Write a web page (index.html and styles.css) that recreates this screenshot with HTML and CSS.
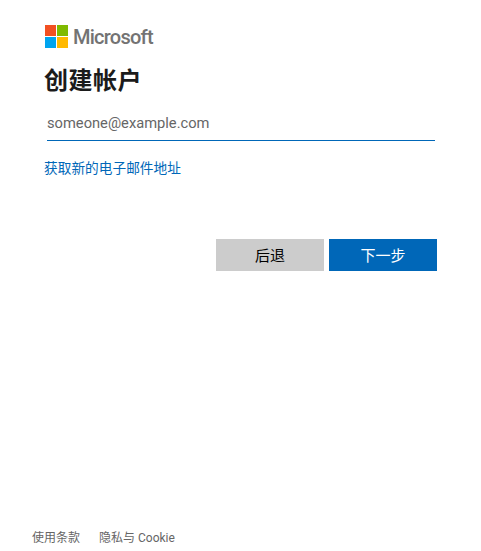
FILE: index.html
```html
<!DOCTYPE html>
<html lang="zh-CN">
<head>
  <meta charset="UTF-8" />
  <title>创建帐户</title>
  <link rel="stylesheet" href="styles.css">
</head>
<body>

<div class="page">
  <div class="card">
    <div class="logo">
      <svg class="logo-mark" width="24" height="24" viewBox="0 0 24 24">
        <rect x="0" y="0" width="11" height="11" fill="#f25022"/>
        <rect x="12" y="0" width="11" height="11" fill="#7fba00"/>
        <rect x="0" y="12" width="11" height="11" fill="#00a4ef"/>
        <rect x="12" y="12" width="11" height="11" fill="#ffb900"/>
      </svg>
      <span class="logo-text">Microsoft</span>
    </div>

    <h1 class="title">创建帐户</h1>

    <input class="email-input" type="text" placeholder="someone@example.com">

    <a class="new-email" href="#">获取新的电子邮件地址</a>

    <div class="buttons">
      <button class="btn btn-back">后退</button>
      <button class="btn btn-next">下一步</button>
    </div>
  </div>

  <div class="footer">
    <a href="#">使用条款</a>
    <a href="#">隐私与 Cookie</a>
  </div>
</div>

</body>
</html>
```

FILE: styles.css
```css
html, body {
  height: 100%;
}

body {
  margin: 0;
  background: #fff;
  font-family: Roboto, "Noto Sans CJK SC", sans-serif;
  color: #1b1b1b;
}

.page {
  height: 551px;
  display: flex;
  flex-direction: column;
  justify-content: space-between;
  overflow: hidden;
}

.card {
  padding: 25px 44px 0 45px;
}

.logo {
  display: flex;
  align-items: center;
  gap: 4px;
  height: 24px;
}

.logo-text {
  font-size: 20px;
  line-height: 24px;
  font-weight: 500;
  letter-spacing: -0.75px;
  color: #737373;
}

.title {
  margin: 16px 0 0 -1px;
  font-size: 24px;
  letter-spacing: 0.5px;
  line-height: 32px;
  font-weight: 700;
}

.email-input {
  display: block;
  box-sizing: border-box;
  width: 388px;
  height: 36px;
  margin: 8px 0 0 2px;
  padding: 0;
  border: none;
  border-bottom: 1px solid #0067b8;
  outline: none;
  font-family: inherit;
  font-size: 14.7px;
  color: #1b1b1b;
}

.email-input::placeholder {
  color: #666;
  opacity: 1;
}

.new-email {
  display: block;
  margin: 18px 0 0 -1px;
  font-size: 13.7px;
  line-height: 18px;
  color: #0067b8;
  text-decoration: none;
}

.buttons {
  display: flex;
  justify-content: flex-end;
  gap: 5px;
  margin: 62px 0 0;
}

.btn {
  width: 108px;
  height: 32px;
  padding: 0 0 2px;
  border: none;
  font-family: inherit;
  font-size: 15px;
}

.btn-back {
  background: #ccc;
  color: #000;
}

.btn-next {
  background: #0067b8;
  color: #fff;
}

.footer {
  display: flex;
  gap: 19px;
  padding: 0 0 5px 32px;
  font-size: 12px;
  line-height: 16px;
}

.footer a {
  color: #666;
  text-decoration: none;
}
```
